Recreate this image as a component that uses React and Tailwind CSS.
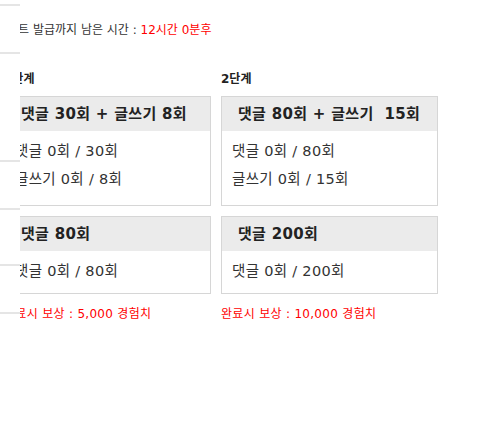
const stages = [
  {
    label: "1단계",
    reward: "5,000",
    cards: [
      { title: "댓글 30회 + 글쓰기 8회", rows: ["댓글 0회 / 30회", "글쓰기 0회 / 8회"], body: "h-[74px]" },
      { title: "댓글 80회", rows: ["댓글 0회 / 80회"], body: "h-[42px]" },
    ],
  },
  {
    label: "2단계",
    reward: "10,000",
    cards: [
      { title: "댓글 80회 + 글쓰기  15회", rows: ["댓글 0회 / 80회", "글쓰기 0회 / 15회"], body: "h-[74px]" },
      { title: "댓글 200회", rows: ["댓글 0회 / 200회"], body: "h-[42px]" },
    ],
  },
];

function MissionCard({ card }) {
  return (
    <div className="border border-[#d6d6d6] bg-white">
      <div className="h-[34px] bg-[#ebebeb] pl-[16px] flex items-center text-[15px] font-bold text-[#222] whitespace-pre tracking-[0.3px]">
        {card.title}
      </div>
      <div className={`${card.body} pt-[6px] pl-[10px]`}>
        {card.rows.map((r) => (
          <p key={r} className="h-[28px] leading-[28px] text-[14.5px] text-[#333] tracking-[0.3px]">
            {r}
          </p>
        ))}
      </div>
    </div>
  );
}

export default function App() {
  return (
    <div className="flex w-[486px] h-[431px] bg-white font-['DejaVu_Sans','Noto_Sans_CJK_KR',sans-serif] overflow-hidden">
      <div className="w-[20px] shrink-0 flex flex-col">
        <div className="mt-[4px] h-[2px] bg-[#e5e5e5]" />
        <div className="mt-[46px] h-[2px] bg-[#e5e5e5]" />
        <div className="mt-[106px] h-[2px] bg-[#e5e5e5]" />
        <div className="mt-[46px] h-[2px] bg-[#e5e5e5]" />
        <div className="mt-[54px] h-[2px] bg-[#e5e5e5]" />
        <div className="mt-[46px] h-[2px] bg-[#e5e5e5]" />
      </div>
      <div className="flex-1 overflow-hidden">
        <div className="ml-[-16px] pt-[21px]">
          <p className="ml-[-8px] h-[18px] leading-[18px] text-[12px] text-[#333] whitespace-nowrap">
            포인트 발급까지 남은 시간 : <span className="text-[#ff0000]">12시간 0분후</span>
          </p>
          <div className="mt-[31px] grid grid-cols-[207px_217px] gap-x-[10px]">
            {stages.map((s) => (
              <div key={s.label}>
                <p className="h-[18px] leading-[18px] text-[12px] font-bold text-[#222]">{s.label}</p>
                <div className="mt-[8px] flex flex-col gap-[10px]">
                  {s.cards.map((c) => (
                    <MissionCard key={c.title} card={c} />
                  ))}
                </div>
                <p className="mt-[11px] h-[18px] leading-[18px] text-[12px] text-[#ff0000] whitespace-nowrap tracking-[0.3px]">
                  완료시 보상 : {s.reward} 경험치
                </p>
              </div>
            ))}
          </div>
        </div>
      </div>
    </div>
  );
}
